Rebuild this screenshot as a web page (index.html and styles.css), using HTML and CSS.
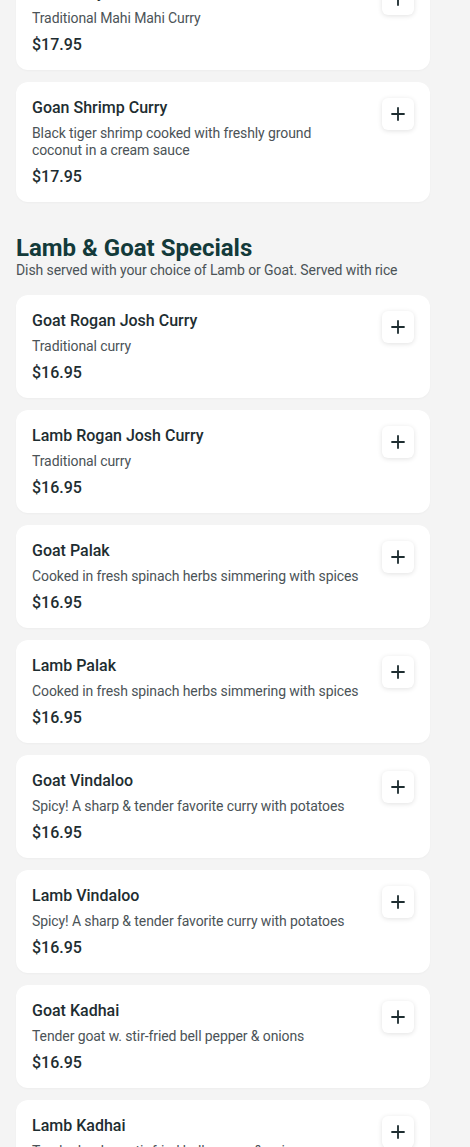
FILE: index.html
```html
<!DOCTYPE html>
<html>
    <head>
        <meta charset="utf-8">
        <title>Menu</title>
        <link rel="stylesheet" href="styles.css">
    </head>
    <body>
        <div class="menu">
            <section class="section section-scrolled">
                <div class="items">
                    <div class="item">
                        <div class="item-text">
                            <p class="item-name">Fish Curry</p>
                            <p class="item-desc">Traditional Mahi Mahi Curry</p>
                            <p class="item-price">$17.95</p>
                        </div>
                        <button class="add-btn"><svg viewBox="0 0 24 24"><path d="M12 4v16M4 12h16"/></svg></button>
                    </div>
                    <div class="item">
                        <div class="item-text">
                            <p class="item-name">Goan Shrimp Curry</p>
                            <p class="item-desc">Black tiger shrimp cooked with freshly ground coconut in a cream sauce</p>
                            <p class="item-price">$17.95</p>
                        </div>
                        <button class="add-btn"><svg viewBox="0 0 24 24"><path d="M12 4v16M4 12h16"/></svg></button>
                    </div>
                </div>
            </section>

            <section class="section">
                <h2 class="section-title">Lamb &amp; Goat Specials</h2>
                <p class="section-desc">Dish served with your choice of Lamb or Goat. Served with rice</p>
                <div class="items">
                    <div class="item">
                        <div class="item-text">
                            <p class="item-name">Goat Rogan Josh Curry</p>
                            <p class="item-desc">Traditional curry</p>
                            <p class="item-price">$16.95</p>
                        </div>
                        <button class="add-btn"><svg viewBox="0 0 24 24"><path d="M12 4v16M4 12h16"/></svg></button>
                    </div>
                    <div class="item">
                        <div class="item-text">
                            <p class="item-name">Lamb Rogan Josh Curry</p>
                            <p class="item-desc">Traditional curry</p>
                            <p class="item-price">$16.95</p>
                        </div>
                        <button class="add-btn"><svg viewBox="0 0 24 24"><path d="M12 4v16M4 12h16"/></svg></button>
                    </div>
                    <div class="item">
                        <div class="item-text">
                            <p class="item-name">Goat Palak</p>
                            <p class="item-desc">Cooked in fresh spinach herbs simmering with spices</p>
                            <p class="item-price">$16.95</p>
                        </div>
                        <button class="add-btn"><svg viewBox="0 0 24 24"><path d="M12 4v16M4 12h16"/></svg></button>
                    </div>
                    <div class="item">
                        <div class="item-text">
                            <p class="item-name">Lamb Palak</p>
                            <p class="item-desc">Cooked in fresh spinach herbs simmering with spices</p>
                            <p class="item-price">$16.95</p>
                        </div>
                        <button class="add-btn"><svg viewBox="0 0 24 24"><path d="M12 4v16M4 12h16"/></svg></button>
                    </div>
                    <div class="item">
                        <div class="item-text">
                            <p class="item-name">Goat Vindaloo</p>
                            <p class="item-desc">Spicy! A sharp &amp; tender favorite curry with potatoes</p>
                            <p class="item-price">$16.95</p>
                        </div>
                        <button class="add-btn"><svg viewBox="0 0 24 24"><path d="M12 4v16M4 12h16"/></svg></button>
                    </div>
                    <div class="item">
                        <div class="item-text">
                            <p class="item-name">Lamb Vindaloo</p>
                            <p class="item-desc">Spicy! A sharp &amp; tender favorite curry with potatoes</p>
                            <p class="item-price">$16.95</p>
                        </div>
                        <button class="add-btn"><svg viewBox="0 0 24 24"><path d="M12 4v16M4 12h16"/></svg></button>
                    </div>
                    <div class="item">
                        <div class="item-text">
                            <p class="item-name">Goat Kadhai</p>
                            <p class="item-desc">Tender goat w. stir-fried bell pepper &amp; onions</p>
                            <p class="item-price">$16.95</p>
                        </div>
                        <button class="add-btn"><svg viewBox="0 0 24 24"><path d="M12 4v16M4 12h16"/></svg></button>
                    </div>
                    <div class="item">
                        <div class="item-text">
                            <p class="item-name">Lamb Kadhai</p>
                            <p class="item-desc">Tender lamb w. stir-fried bell pepper &amp; onions</p>
                            <p class="item-price">$16.95</p>
                        </div>
                        <button class="add-btn"><svg viewBox="0 0 24 24"><path d="M12 4v16M4 12h16"/></svg></button>
                    </div>
                </div>
            </section>
        </div>
    </body>
</html>
```

FILE: styles.css
```css
html, body {
    margin: 0;
    background: #f4f4f4;
    font-family: Roboto, "Liberation Sans", sans-serif;
    overflow: hidden;
}
.menu {
    width: 414px;
    padding: 0 16px;
}
/* page is scrolled part way into the previous section */
.section-scrolled {
    margin-top: -33px;
}
.section {
    margin-bottom: 31px;
}
.section-title {
    margin: 0;
    font-size: 24px;
    line-height: 30px;
    font-weight: 700;
    color: #133a3a;
}
.section-desc {
    margin: -1px 0 16px;
    font-size: 14px;
    line-height: 17px;
    letter-spacing: -0.1px;
    color: #4b5357;
}
.items {
    display: flex;
    flex-direction: column;
    gap: 12px;
}
.item {
    display: flex;
    align-items: flex-start;
    gap: 20px;
    padding: 16px 16px 15px;
    background: #fff;
    border-radius: 12px;
    box-shadow: 0 1px 2px rgba(0,0,0,0.03);
}
.item-text {
    flex: 1;
}
.item-text p {
    margin: 0;
}
.item-name {
    font-size: 16px;
    line-height: 20px;
    font-weight: 500;
    color: #1e2d31;
}
.item-desc {
    margin-top: 7px !important;
    font-size: 14px;
    line-height: 17px;
    letter-spacing: -0.1px;
    color: #4b5357;
}
.item-price {
    margin-top: 8px !important;
    font-size: 16px;
    line-height: 20px;
    font-weight: 500;
    color: #1e2d31;
}
.add-btn {
    flex: none;
    width: 32px;
    height: 32px;
    padding: 0;
    border: 0;
    border-radius: 6px;
    background: #fff;
    box-shadow: 0 1px 5px rgba(0,0,0,0.12);
    display: flex;
    align-items: center;
    justify-content: center;
    cursor: pointer;
}
.add-btn svg {
    width: 20px;
    height: 20px;
    fill: none;
    stroke: #1e2d31;
    stroke-width: 2.2;
}
```
